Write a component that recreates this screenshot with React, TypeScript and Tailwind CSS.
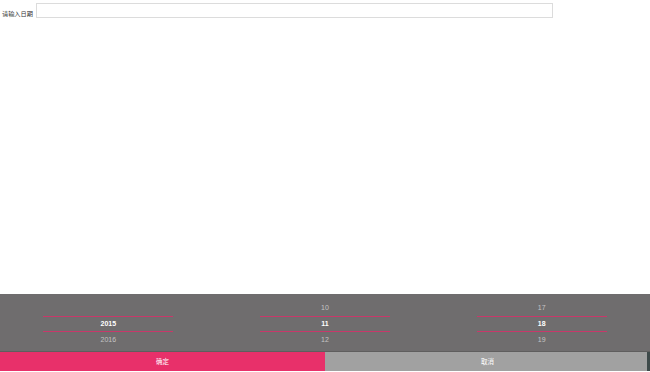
import React from 'react'

const columns = [
  { prev: '', current: '2015', next: '2016' },
  { prev: '10', current: '11', next: '12' },
  { prev: '17', current: '18', next: '19' },
]

const font = { fontFamily: '"Liberation Sans", "Noto Sans CJK SC", sans-serif' }

const App: React.FC = () => {
  return (
    <div className="flex h-[372px] w-[650px] flex-col justify-between bg-white" style={font}>
      <div className="flex items-end pl-[2px] pt-[3px]">
        <label className="mb-[1px] w-[31px] whitespace-nowrap text-[6.2px] leading-none text-[#333]">请输入日期</label>
        <input type="text" className="ml-[3px] h-[15px] w-[517px] border border-[#dcdcdc] bg-white outline-none" />
      </div>

      {/* Date picker */}
      <div className="relative mb-[1px]">
        <div className="grid h-[57px] grid-cols-3 bg-[#6f6d6e] pt-[7px]">
          {columns.map((c, i) => (
            <div key={i} className="flex flex-col items-center">
              <div className="flex h-[15px] items-center text-[7px] text-[#c4c4c4]">{c.prev}</div>
              <div className="h-px w-[130px] bg-[#c8386a]" />
              <div className="flex h-[14px] items-center justify-center text-[7px] font-semibold text-white">
                {c.current}
              </div>
              <div className="h-px w-[130px] bg-[#c8386a]" />
              <div className="flex h-[16px] items-center text-[7px] text-[#c4c4c4]">{c.next}</div>
            </div>
          ))}
        </div>
        <div className="flex h-[20px] border-t border-[#5f5e5e]">
          <button type="button" className="w-[325px] bg-[#e8306a] text-[6.5px] text-white">确定</button>
          <button type="button" className="flex-1 bg-[#a1a1a1] text-[6.5px] text-white">取消</button>
        </div>
        <div className="absolute bottom-0 right-0 h-[19px] w-[3px] bg-[#3e4a4a]" />
      </div>
    </div>
  )
}

export default App
